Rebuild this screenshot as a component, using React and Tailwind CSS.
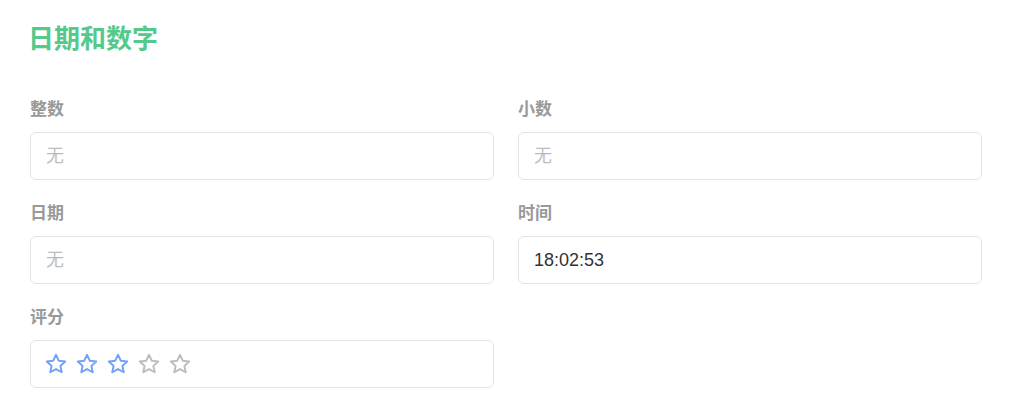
const Star = ({ on }) => (
  <svg width="24" height="24" viewBox="0 0 24 24" fill="none" stroke={on ? "#73a0f8" : "#bdbdbd"} strokeWidth="2" strokeLinejoin="round">
    <path d="M12 2.8l2.75 5.9 6.45.75-4.78 4.42 1.28 6.38L12 17.02l-5.7 3.23 1.28-6.38L2.8 9.45l6.45-.75z" />
  </svg>
);

const Field = ({ label, children }) => (
  <div className="flex flex-col">
    <div className="h-6 flex items-center text-[17px] font-bold text-[#999] mb-[10px]">{label}</div>
    <div className="h-12 rounded-md border border-[#e4e4e7] bg-white flex items-center px-[15px]">{children}</div>
  </div>
);

const Empty = () => <span className="text-[18px] text-[#bcbcbc]">无</span>;

export default function App() {
  return (
    <div className="min-h-screen bg-white pl-[30px] pt-[21px] font-['Liberation_Sans','Noto_Sans_CJK_SC',sans-serif]">
      <h1 className="h-9 flex items-center -ml-[2px] text-[26px] font-bold text-[#53c98b] mb-[41px]">日期和数字</h1>
      <div className="grid grid-cols-[464px_464px] gap-x-6 gap-y-[22px]">
        <Field label="整数"><Empty /></Field>
        <Field label="小数"><Empty /></Field>
        <Field label="日期"><Empty /></Field>
        <Field label="时间"><span className="text-[18px] text-[#333]">18:02:53</span></Field>
        <Field label="评分">
          <div className="flex items-center gap-[7px] -ml-[2px]">
            <Star on />
            <Star on />
            <Star on />
            <Star />
            <Star />
          </div>
        </Field>
      </div>
    </div>
  );
}
